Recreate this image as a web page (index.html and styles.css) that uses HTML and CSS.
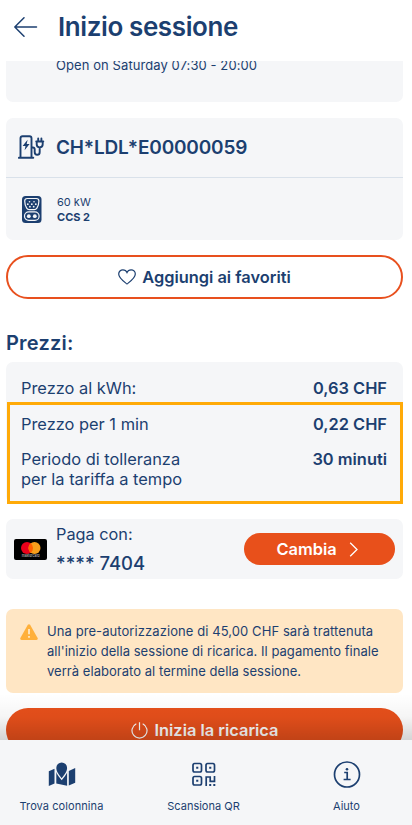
FILE: index.html
```html
<!DOCTYPE html>
<html lang="it">
<head>
<meta charset="utf-8">
<meta name="viewport" content="width=device-width, initial-scale=1">
<title>Inizio sessione</title>
<link rel="stylesheet" href="styles.css">
</head>
<body>
<div class="app">
  <header class="header">
    <svg class="back" width="24" height="20" viewBox="0 0 24 20"><path d="M10 .8 .8 10l9.200 9.200M.8 10H22.500"/></svg>
    <h1><span class="t-title">Inizio sessione</span></h1>
  </header>
  <main class="content">
    <section class="card hours"><span class="t-hours">Open on Saturday 07:30 - 20:00</span></section>

    <section class="card station">
      <div class="station-head">
        <svg class="pump" width="27" height="25" viewBox="0 0 27 25">
          <path d="M2.500 22V3.200Q2.500 1.200 4.500 1.200h7q2 0 2 2V22M.9 22.800h14.400M13.500 12.500h1.400q1.800 0 1.800 2v2.500q0 2.800 2.500 2.800t2.500-2.900v-4.300M18.200 6.500h7.100M18.700 6.500v2.800q0 3.100 3 3.100t3-3.100V6.500M20.200 6V3.500M23.400 6V3.500"/>
          <path class="solid" d="M9.600 4.800 4.600 11h2.900l-.9 4.200 5-6.300H8.700z"/>
        </svg>
        <span class="t-code">CH*LDL*E00000059</span>
      </div>
      <div class="station-plug">
        <svg width="20" height="27" viewBox="0 0 20 27">
          <rect class="navy" width="19.500" height="27" rx="3.500"/>
          <path class="wline" d="M5.300 2.500h9q2.600 0 2.600 2.600 0 4-2 7-1 1.500-2.600 1.500H7.200q-1.600 0-2.500-1.500-2-3-2-7 0-2.600 2.600-2.600z"/>
          <rect class="wline" x="2.500" y="15.900" width="14.600" height="8.500" rx="4.200"/>
          <g class="white"><circle cx="7.500" cy="5.700" r=".8"/><circle cx="12" cy="5.700" r=".8"/><circle cx="5.800" cy="8.200" r=".9"/><circle cx="9.800" cy="8.200" r=".9"/><circle cx="13.800" cy="8.200" r=".9"/><circle cx="7.900" cy="10.700" r=".9"/><circle cx="11.700" cy="10.700" r=".9"/><circle cx="6.800" cy="20.200" r="1.900"/><circle cx="12.800" cy="20.200" r="1.900"/></g>
        </svg>
        <div class="plug-text"><span class="t-kw">60 kW</span><strong class="t-ccs">CCS 2</strong></div>
      </div>
    </section>

    <button class="favorite">
      <svg width="18" height="16" viewBox="0 0 18 16"><path d="M9 15C6.200 12.900.7 9.300.7 5.100.7 2.600 2.600.8 4.900.8 6.800.8 8.300 1.800 9 3.500 9.700 1.800 11.200.8 13.100.8c2.300 0 4.200 1.800 4.200 4.300C17.300 9.300 11.800 12.900 9 15z"/></svg>
      <span class="t-fav">Aggiungi ai favoriti</span>
    </button>

    <h2><span class="t-prices">Prezzi:</span></h2>
    <section class="card prices">
      <div class="row"><span class="t-kwh">Prezzo al kWh:</span><strong>0,63 CHF</strong></div>
      <div class="row"><span class="t-min">Prezzo per 1 min</span><strong>0,22 CHF</strong></div>
      <div class="row"><span class="t-grace">Periodo di tolleranza<br>per la tariffa a tempo</span><strong>30 minuti</strong></div>
      <div class="highlight"></div>
    </section>

    <section class="card payment">
      <svg class="mastercard" width="33" height="21" viewBox="0 0 33 21">
        <rect width="33" height="21" rx="2"/>
        <circle cx="13" cy="9" r="6" fill="#eb001b"/><circle cx="20.500" cy="9" r="6" fill="#f79e1b"/>
        <path fill="#ff5f00" d="M16.750 4.300a6 6 0 0 1 0 9.400 6 6 0 0 1 0-9.400z"/>
        <text x="16.700" y="18.200" text-anchor="middle" textLength="18" lengthAdjust="spacingAndGlyphs">mastercard</text>
      </svg>
      <div class="pay-text"><span class="t-pay">Paga con:</span><span class="t-num">**** 7404</span></div>
      <button class="change"><span class="t-change">Cambia</span>
        <svg width="10" height="15" viewBox="0 0 10 15"><path d="M1.200.8 8 7.500l-6.800 6.700"/></svg></button>
    </section>

    <section class="notice">
      <svg width="18" height="16" viewBox="0 0 18 16"><path d="M7.800.8q1.200-1.300 2.300 0l7.500 13.100q.7 1.700-1.100 2H1.500q-1.800-.3-1.100-2z" fill="#ffb03b"/><path d="M9 5v5.200M9 12v1.700" stroke="#fff2df" stroke-width="1.500"/></svg>
      <p><span class="n1">Una pre-autorizzazione di 45,00 CHF sarà trattenuta</span><br><span class="n2">all'inizio della sessione di ricarica. Il pagamento finale</span><br><span class="n3">verrà elaborato al termine della sessione.</span></p>
    </section>

    <button class="start">
      <svg width="17" height="17" viewBox="0 0 17 17"><path d="M5.300 1.800a7.500 7.500 0 1 0 6.400 0M8.500.3v8"/></svg>
      <span class="t-start">Inizia la ricarica</span>
    </button>
    <div class="fade"></div>
  </main>
  <nav class="nav">
    <a class="tab">
      <svg width="28" height="28" viewBox="0 0 28 28"><path class="solid" d="M.8 10.200 6.500 7.700V22.500L.8 24.900zM20.800 9.900 27.200 6.900v14.800L20.800 24.400z"/><path class="solid" d="M8.300 10.500h10.800v14.300L8.300 22.400z"/><path class="pin" d="M13.700 17.200C11.200 14.200 8.300 10.500 8.300 7A5.400 5.600 0 0 1 19.100 7c0 3.500-2.900 7.200-5.400 10.200z"/></svg>
      <span class="t-find">Trova colonnina</span>
    </a>
    <a class="tab">
      <svg width="28" height="28" viewBox="0 0 28 28"><g class="line"><rect x="3" y="2.500" width="8.500" height="8.500" rx="1.700"/><rect x="16" y="2.500" width="8.500" height="8.500" rx="1.700"/><rect x="3" y="15.500" width="8.500" height="8.500" rx="1.700"/><path d="M16.200 25v-9h4v4.300h4.300V14.900"/></g><path class="solid" d="M6.200 5.700h2.100v2.100H6.200zM19.200 5.700h2.100v2.100h-2.100zM6.200 18.700h2.100v2.100H6.200zM19.200 23h2v2h-2zM23.300 23h2v2h-2z"/></svg>
      <span class="t-scan">Scansiona QR</span>
    </a>
    <a class="tab">
      <svg width="28" height="28" viewBox="0 0 28 28"><g class="line"><circle cx="14" cy="13.500" r="12.500"/><path d="M11.200 11.500h3v7M10.600 18.500h7"/></g><circle class="solid" cx="14" cy="8.300" r="1.300"/></svg>
      <span class="t-help">Aiuto</span>
    </a>
  </nav>
</div>
</body>
</html>
```
FILE: styles.css
```css
* { box-sizing: border-box; }
body { margin: 0; font-family: Inter, "Liberation Sans", sans-serif; color: #1c3f70; background: #fff; }
h1, h2, p { margin: 0; }
svg { display: block; flex: none; }
button { font: inherit; color: inherit; padding: 0; border: 0; display: flex; align-items: center; justify-content: center; }
strong { font-weight: 600; }
span, strong { white-space: nowrap; }
.app { width: 412px; height: 825px; display: flex; flex-direction: column; overflow: hidden; }

.header { height: 61px; flex: none; display: flex; padding: 10px 0 0 14px; }
.back { margin-top: 7px; fill: none; stroke: #1c3f70; stroke-width: 1.5; stroke-linecap: round; stroke-linejoin: round; }
h1 { margin-left: 20px; font-size: 26px; line-height: 34px; font-weight: 600; letter-spacing: -.4px; }

.content { height: 679px; flex: none; position: relative; overflow: hidden; padding: 0 9px 0 6px; }
.card { background: #f5f6f8; border-radius: 7px; }
.hours { display: flex; align-items: flex-start; height: 41px; border-radius: 0 0 7px 7px; padding-left: 50px; font-size: 13px; line-height: 16px; letter-spacing: .08px; }
.hours span { margin-top: -4px; }

.station { height: 122px; margin-top: 16px; }
.station-head { height: 60px; border-bottom: 1px solid #d9e1ea; display: flex; align-items: center; padding-left: 12px; gap: 11px; font-size: 19px; font-weight: 600; letter-spacing: -.17px; }
.pump { fill: none; stroke: #1c3f70; stroke-width: 1.9; stroke-linecap: round; stroke-linejoin: round; }
.solid { fill: #1c3f70; stroke: none; }
.station-plug { height: 62px; display: flex; align-items: center; padding-left: 16px; gap: 15px; }
.navy { fill: #1c3f70; }
.wline { fill: none; stroke: #f5f6f8; stroke-width: 1.2; }
.white { fill: #f5f6f8; }
.plug-text { display: flex; flex-direction: column; align-items: flex-start; font-size: 11px; line-height: 15px; padding-top: 2px; }
.plug-text strong { font-weight: 700; }

.favorite { width: 100%; height: 44px; margin-top: 15px; gap: 6px; border: 2px solid #e8501e; border-radius: 22px; background: #fff; font-size: 16.4px; font-weight: 600; }
.favorite svg { fill: none; stroke: #1c3f70; stroke-width: 1.2; }

h2 { margin-top: 30px; height: 33px; font-size: 20px; line-height: 28px; font-weight: 600; letter-spacing: .2px; }
.prices { position: relative; height: 141px; padding: 16px 16px 0 15px; display: flex; flex-direction: column; gap: 15.5px; font-size: 16.4px; line-height: 20px; }
.row { display: flex; justify-content: space-between; align-items: flex-start; }
.highlight { position: absolute; left: 1px; top: 40px; width: 396px; height: 102px; border: 3px solid #ffaa08; }

.payment { height: 60px; margin-top: 16px; display: flex; align-items: center; padding: 0 8px; }
.mastercard text { font: 3.8px Inter, sans-serif; fill: #ddd; }
.pay-text { margin-left: 9px; display: flex; flex-direction: column; align-items: flex-start; font-size: 16.3px; line-height: 24px; }
.t-num { font-size: 18.5px; line-height: 32px; font-weight: 500; margin-top: 1px; }
.pay-text .t-pay { margin-top: 3px; }
.change { margin-left: auto; width: 151px; height: 32px; border-radius: 16px; background: #e8501b; color: #fff; font-size: 16.4px; font-weight: 600; gap: 12px; padding-right: 4px; }
.change svg { fill: none; stroke: #fff; stroke-width: 1.3; }

.notice { height: 84px; margin-top: 30px; border-radius: 7px; background: #ffe6c4; display: flex; padding: 12px 0 0 14px; gap: 9px; font-size: 13px; line-height: 20px; letter-spacing: .04px; }
.notice svg { margin-top: 3px; }
.n1 { letter-spacing: .08px; }

.start { width: 397px; height: 44px; margin-top: 15px; gap: 7px; border-radius: 22px; background: #e8501b; color: #fff; font-size: 16.4px; font-weight: 600; }
.start svg { fill: none; stroke: #fff; stroke-width: 1.2; }
.fade { position: absolute; left: 0; right: 0; bottom: 0; height: 46px; background: linear-gradient(rgba(0,0,0,0), rgba(0,0,0,.04) 50%, rgba(0,0,0,.17)); }

.nav { height: 85px; flex: none; background: #f5f6f8; display: grid; grid-template-columns: 123px 161px 1fr; font-size: 11px; line-height: 16px; }
.tab { display: flex; flex-direction: column; align-items: center; padding-top: 21px; gap: 9px; }
.tab:last-child { padding-right: 3px; }
.t-find { letter-spacing: .08px; }
.line { fill: none; stroke: #1c3f70; stroke-width: 1.7; }
.pin { fill: #1c3f70; stroke: #f5f6f8; stroke-width: 2.6; paint-order: stroke; }
```
